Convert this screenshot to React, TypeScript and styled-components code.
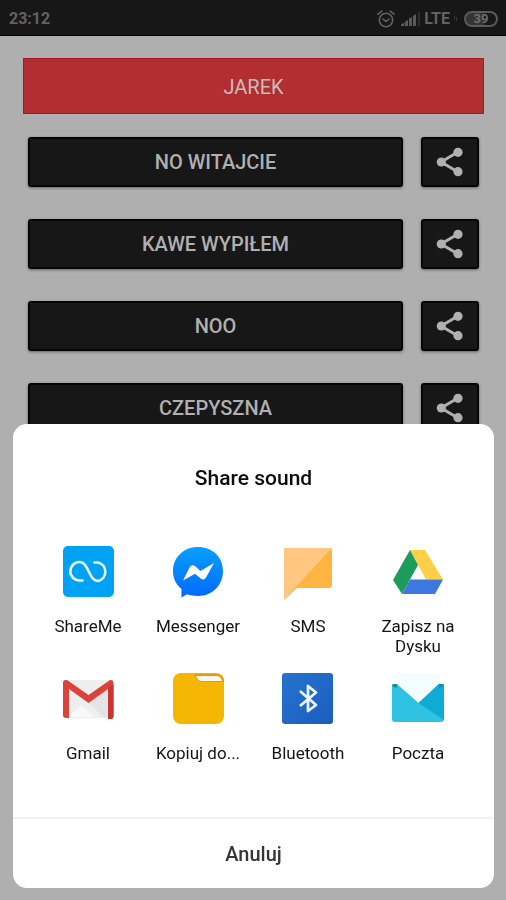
import React from "react";
import styled, { createGlobalStyle } from "styled-components";

const GlobalStyle = createGlobalStyle`
  * { box-sizing: border-box; }
  body {
    margin: 0;
    background: #afafaf;
    font-family: Roboto, "Liberation Sans", sans-serif;
  }
  button { font-family: inherit; cursor: pointer; }
`;

const Screen = styled.div`
  height: 100vh;
  overflow: hidden;
  display: flex;
  flex-direction: column;
`;

const StatusBar = styled.header`
  flex: none;
  display: flex;
  align-items: center;
  justify-content: space-between;
  height: 36px;
  padding: 2px 8px 0 9px;
  background: #171717;
  border-bottom: 1px solid #000;
  color: #626262;
  font-weight: 700;
`;

const Clock = styled.time`
  font-size: 16px;
`;

const Indicators = styled.div`
  display: flex;
  align-items: center;
  gap: 6px;
  font-size: 16px;
`;

const Network = styled.span`
  display: flex;
  align-items: center;
  gap: 3px;
`;

const Battery = styled.span`
  display: flex;
  align-items: center;
  justify-content: center;
  width: 34px;
  height: 16px;
  border: 2px solid #5a5a5a;
  border-radius: 8px;
  background: linear-gradient(90deg, #353535 60%, #171717 60%);
  color: #6e6e6e;
  font-size: 13px;
  line-height: 12px;
`;

const Board = styled.main`
  flex: 1;
  display: flex;
  flex-direction: column;
  gap: 23px;
  padding: 22px 22px 0 23px;
`;

const Banner = styled.h1`
  flex: none;
  margin: 0;
  padding-top: 2px;
  border: 1px solid #ad161c;
  background: #b22e31;
  color: #c9bcbc;
  font-size: 20px;
  font-weight: 400;
  line-height: 52px;
  text-align: center;
`;

const SoundList = styled.ul`
  display: flex;
  flex-direction: column;
  gap: 32px;
  margin: 0;
  padding: 0 5px;
  list-style: none;
`;

const SoundRow = styled.li`
  display: grid;
  grid-template-columns: 1fr 58px;
  gap: 18px;
`;

const DarkButton = styled.button`
  display: flex;
  align-items: center;
  justify-content: center;
  height: 50px;
  padding: 0;
  border: 2px solid #050505;
  border-radius: 3px;
  background: #171717;
  box-shadow: 0 1px 3px rgba(0, 0, 0, 0.45);
  color: #b0b0b0;
  font-size: 20px;
  font-weight: 500;
`;

const Sheet = styled.section`
  position: fixed;
  right: 12px;
  bottom: 12px;
  left: 13px;
  border-radius: 14px;
  background: #fff;
  overflow: hidden;
`;

const SheetTitle = styled.h2`
  margin: 0;
  padding: 42px 20px 56px;
  color: #0c0c0c;
  font-size: 21px;
  font-weight: 500;
  line-height: 24px;
  text-align: center;
`;

const Targets = styled.div`
  display: grid;
  grid-template-columns: repeat(4, minmax(0, 1fr));
  gap: 17px 0;
  padding: 0 21px 54px 20px;
`;

const Target = styled.button`
  display: flex;
  flex-direction: column;
  align-items: center;
  gap: 18px;
  padding: 0;
  border: 0;
  background: none;
  color: #151515;
  font-size: 17px;
  line-height: 20px;
`;

const TargetLabel = styled.span`
  max-width: 90px;
`;

const Cancel = styled.button`
  display: block;
  width: 100%;
  height: 71px;
  padding: 0;
  border: 0;
  border-top: 2px solid #f3f3f3;
  background: none;
  color: #353535;
  font-size: 20px;
  font-weight: 500;
`;

const AlarmIcon = () => (
  <svg width="18" height="18" viewBox="0 0 18 18" fill="none" stroke="#626262" strokeWidth="1.6" strokeLinecap="round" aria-hidden="true">
    <circle cx="9" cy="10" r="6.7" />
    <path d="M1 4.2 4.8 1.2M17 4.2l-3.800-3M6 9l3 2.500L12 9" />
  </svg>
);

const SignalIcon = () => (
  <svg width="20" height="14" viewBox="0 0 20 14" fill="#5a5a5a" aria-hidden="true">
    <path d="M0 12.500 3.300 10.500V14H0zM4 9.500l3-1.500v6H4zM8 6.500 11 5v9H8zM12 4l3-2v12h-3z" />
    <path d="M17 0h2v14h-2z" fill="#2e2e2e" />
  </svg>
);

const DataIcon = () => (
  <svg width="5" height="5" viewBox="0 0 5 5" stroke="#363636" aria-hidden="true">
    <path d="M1.500 0v4M3.500 1v4" />
  </svg>
);

const ShareIcon = () => (
  <svg width="28" height="30" viewBox="0 0 28 30" fill="#b0b0b0" stroke="#b0b0b0" aria-hidden="true">
    <path d="M22 5 5 15l17 10" fill="none" strokeWidth="3" />
    <g stroke="none">
      <circle cx="22" cy="5.300" r="4.600" />
      <circle cx="5.300" cy="15" r="4.600" />
      <circle cx="22" cy="24.700" r="4.600" />
    </g>
  </svg>
);

const AppIcon = ({ children }: { children: React.ReactNode }) => (
  <svg width="52" height="52" viewBox="0 0 52 52" overflow="visible" aria-hidden="true">
    {children}
  </svg>
);

const shareMe = (
  <AppIcon>
    <rect x="1" y="0" width="51" height="51" rx="5" fill="#00a3f3" />
    <path
      d="M20.500 34.500H17.500A9.200 9.200 0 0 1 17.500 16C27 16 26.500 35 36 35A9.500 9.500 0 0 0 36 16.500H32.500"
      fill="none" stroke="#effaff" strokeWidth="2.600" strokeLinecap="round"
    />
  </AppIcon>
);

const messenger = (
  <AppIcon>
    <defs>
      <linearGradient id="messengerFill" x1="0" y1="0" x2="0" y2="1">
        <stop offset="0" stopColor="#08a0ff" />
        <stop offset="1" stopColor="#0068ff" />
      </linearGradient>
    </defs>
    <path d="M26 1C11.500 1 1 11.500 1 25c0 7.500 3 13.500 8.500 18v8.500l5.500-3.200c3.500 1.200 7 1.700 11 1.700 14.500 0 25-11 25-25S40.500 1 26 1Z" fill="url(#messengerFill)" />
    <path d="M11 34.500 17.500 21.500q2-3.500 5.500-1.500l5.500 5L42 17l-8 14.500q-2 3.200-5 1.200l-6-5Z" fill="#fff" />
  </AppIcon>
);

const sms = (
  <AppIcon>
    <path d="M3 2h45q2 0 2 2v35q0 3-3 3H15L2 54V3q0-1 1-1Z" fill="#fdb441" />
    <path d="M3 2h45q1 0 1.500.5L2 54V3q0-1 1-1Z" fill="#ffc77f" />
  </AppIcon>
);

const drive = (
  <AppIcon>
    <path d="M18 4h15l18 29.500H34Z" fill="#ffcf48" />
    <path d="M18 4 1 34l9 14 16-29Z" fill="#1c9c5b" />
    <path d="M18 33.500h33L43 48H10Z" fill="#3d78df" />
  </AppIcon>
);

const gmail = (
  <AppIcon>
    <path d="M2 7h49v36q0 2-2 2H4q-2 0-2-2Z" fill="#eeeeee" />
    <path d="M7 44 19 32l14 12Z" fill="#f8f8f8" />
    <path d="m26.500 29 19-15v31H42Z" fill="#e4e4e6" />
    <path d="M1 10v32q0 3 3 3h3V16l19.500 14L46 16v30h2.500q3 0 3-3V10q0-3-3-3H48L26.500 22 5 7H4q-3 0-3 3Z" fill="#db433b" />
    <path d="M46 15v31h2.500q3 0 3-3V11Z" fill="#c93530" />
  </AppIcon>
);

const folder = (
  <AppIcon>
    <rect x="1" y="0" width="51" height="51" rx="8" fill="#f5b602" />
    <path d="M22 1h22q8 0 8 8H30q-4 0-6-4Z" fill="#e69b0b" />
    <path d="M24 3h20q5 0 6 5H29q-3 0-5-5Z" fill="#fff8e8" />
  </AppIcon>
);

const bluetooth = (
  <AppIcon>
    <defs>
      <linearGradient id="bluetoothFill" x1="0" y1="0" x2="1" y2="1">
        <stop offset="0" stopColor="#2673d0" />
        <stop offset="1" stopColor="#1b5dbe" />
      </linearGradient>
    </defs>
    <rect x="0" y="0" width="51" height="51" rx="3" fill="url(#bluetoothFill)" />
    <path d="m18 18 16 14-8 6V13l8 6.500L18 33" fill="none" stroke="#eaf3ff" strokeWidth="2.800" strokeLinejoin="round" />
  </AppIcon>
);

const mail = (
  <AppIcon>
    <rect x="6" y="1" width="42" height="40" rx="3" fill="#f4fdff" />
    <path d="M0 13q0-2 2-2h3l21.500 19L47 11h3q2 0 2 2v33q0 3-3 3H3q-3 0-3-3Z" fill="#2fc2e3" />
    <path d="M26.500 30 47 11h3q2 0 2 2v34Z" fill="#0eabd4" />
    <path d="M0 13q0-2 2-2h3v4Zm52 0q0-2-2-2h-3v4Z" fill="#1689a9" />
  </AppIcon>
);

const sounds = ["NO WITAJCIE", "KAWE WYPIŁEM", "NOO", "CZEPYSZNA"];

const targets = [
  { label: "ShareMe", icon: shareMe },
  { label: "Messenger", icon: messenger },
  { label: "SMS", icon: sms },
  { label: "Zapisz na Dysku", icon: drive },
  { label: "Gmail", icon: gmail },
  { label: "Kopiuj do...", icon: folder },
  { label: "Bluetooth", icon: bluetooth },
  { label: "Poczta", icon: mail },
];

export default function App() {
  return (
    <>
      <GlobalStyle />
      <Screen>
        <StatusBar>
          <Clock>23:12</Clock>
          <Indicators>
            <AlarmIcon />
            <Network>
              <SignalIcon />
              LTE
              <DataIcon />
            </Network>
            <Battery>39</Battery>
          </Indicators>
        </StatusBar>
        <Board>
          <Banner>JAREK</Banner>
          <SoundList>
            {sounds.map((name) => (
              <SoundRow key={name}>
                <DarkButton type="button">{name}</DarkButton>
                <DarkButton type="button" aria-label={`Share ${name}`}>
                  <ShareIcon />
                </DarkButton>
              </SoundRow>
            ))}
          </SoundList>
        </Board>
      </Screen>
      <Sheet role="dialog" aria-labelledby="share-title">
        <SheetTitle id="share-title">Share sound</SheetTitle>
        <Targets>
          {targets.map(({ label, icon }) => (
            <Target type="button" key={label}>
              {icon}
              <TargetLabel>{label}</TargetLabel>
            </Target>
          ))}
        </Targets>
        <Cancel type="button">Anuluj</Cancel>
      </Sheet>
    </>
  );
}
